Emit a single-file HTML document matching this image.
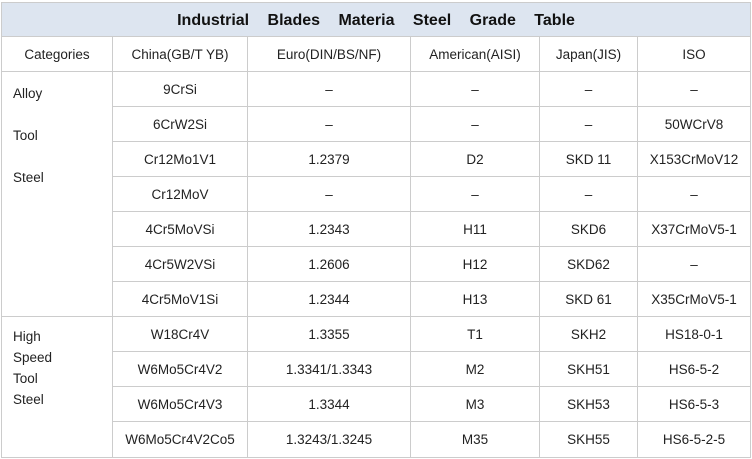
<!DOCTYPE html>
<html><head><meta charset="utf-8"><style>
body{margin:0;width:752px;height:459px;background:#fff;position:relative;overflow:hidden;font-family:"Liberation Sans",Arial,sans-serif;color:#222;font-size:13.5px}
.t{position:absolute;left:1px;top:2px;width:750px;height:35px;background:#dde5f0;border:1px solid #ccc;box-sizing:border-box;text-align:center;line-height:36px;font-weight:bold;font-size:16px;word-spacing:14px;color:#111}
.c{position:absolute;box-sizing:border-box;border-right:1px solid #ccc;border-bottom:1px solid #ccc;text-align:center;display:flex;align-items:center;justify-content:center}
.cat{position:absolute;left:13px}
</style></head><body>
<div class="t">Industrial Blades Materia Steel Grade Table</div>
<div style="position:absolute;left:1px;top:37px;width:1px;height:421px;background:#ccc"></div>
<div id="g"></div>
<div class="cat" style="top:86px">Alloy</div>
<div class="cat" style="top:128px">Tool</div>
<div class="cat" style="top:170px">Steel</div>
<div class="cat" style="top:326px;line-height:21px">High<br>Speed<br>Tool<br>Steel</div>
<script>
var xs=[2,113,248,411,540,638,751];
var ys=[37,72,107,142,177,212,247,282,317,352,387,422,458];
var rows=[
["Categories","China(GB/T YB)","Euro(DIN/BS/NF)","American(AISI)","Japan(JIS)","ISO"],
[null,"9CrSi","–","–","–","–"],
[null,"6CrW2Si","–","–","–","50WCrV8"],
[null,"Cr12Mo1V1","1.2379","D2","SKD 11","X153CrMoV12"],
[null,"Cr12MoV","–","–","–","–"],
[null,"4Cr5MoVSi","1.2343","H11","SKD6","X37CrMoV5-1"],
[null,"4Cr5W2VSi","1.2606","H12","SKD62","–"],
[null,"4Cr5MoV1Si","1.2344","H13","SKD 61","X35CrMoV5-1"],
[null,"W18Cr4V","1.3355","T1","SKH2","HS18-0-1"],
[null,"W6Mo5Cr4V2","1.3341/1.3343","M2","SKH51","HS6-5-2"],
[null,"W6Mo5Cr4V3","1.3344","M3","SKH53","HS6-5-3"],
[null,"W6Mo5Cr4V2Co5","1.3243/1.3245","M35","SKH55","HS6-5-2-5"]];
var h="";
function cell(x0,x1,y0,y1,t){h+='<div class="c" style="left:'+x0+'px;top:'+y0+'px;width:'+(x1-x0)+'px;height:'+(y1-y0)+'px">'+t+'</div>';}
rows.forEach(function(r,i){r.forEach(function(t,j){if(t!==null)cell(xs[j],xs[j+1],ys[i],ys[i+1],t);});});
cell(xs[0],xs[1],72,317,"");cell(xs[0],xs[1],317,458,"");
document.getElementById("g").innerHTML=h;
</script>
</body></html>
